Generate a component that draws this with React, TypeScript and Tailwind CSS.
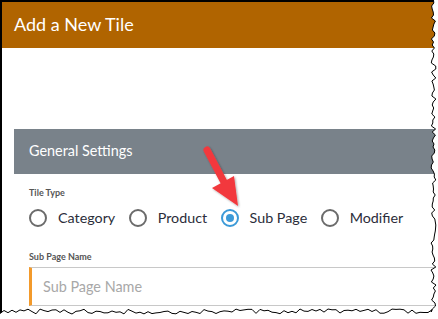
import React from "react";

function Radio({ label, checked }: { label: string; checked?: boolean }) {
  return (
    <div className="flex items-center">
      {checked ? (
        <span className="w-[18px] h-[18px] rounded-full border-2 border-[#3c9ad8] flex items-center justify-center">
          <span className="w-[8px] h-[8px] rounded-full bg-[#3c9ad8]" />
        </span>
      ) : (
        <span className="w-[18px] h-[18px] rounded-full border-2 border-[#6b6b6b]" />
      )}
      <span className="ml-[11px] text-[14.3px] leading-none text-[#2b2d3a]">{label}</span>
    </div>
  );
}

function tornPoints(): { right: string; bottom: string } {
  let seed = 7;
  const rnd = () => {
    seed = (seed * 9301 + 49297) % 233280;
    return seed / 233280;
  };
  const right: string[] = [];
  for (let y = 0; y <= 312; y += 3) {
    right.push(`${(431 + rnd() * 5).toFixed(1)},${y}`);
  }
  const bottom: string[] = [];
  for (let x = 432; x >= 0; x -= 4) {
    bottom.push(`${x},${(309 + rnd() * 5).toFixed(1)}`);
  }
  return { right: right.join(" "), bottom: bottom.join(" ") };
}

export default function App() {
  const { right, bottom } = tornPoints();
  return (
    <div className="relative w-[438px] h-[319px] overflow-hidden bg-white font-['Lato',sans-serif]">
      <div className="h-full border-l-2 border-t-2 border-black">
        <div className="h-[46px] bg-[#b06400] flex items-center pl-[12px] text-white text-[18px] leading-none pb-[2px]">
          Add a New Tile
        </div>
        <div className="ml-[12px] mt-[81px]">
          <div className="h-[45px] bg-[#79828a] flex items-center pl-[15px] text-white text-[14.4px] leading-none">
            General Settings
          </div>
          <div className="pl-[15px]">
            <div className="mt-[14px] text-[9px] font-bold text-[#555] leading-none">Tile Type</div>
            <div className="mt-[12px] flex items-center gap-[13.5px]">
              <Radio label="Category" />
              <Radio label="Product" />
              <Radio label="Sub Page" checked />
              <Radio label="Modifier" />
            </div>
            <div className="mt-[25px] text-[9px] font-bold text-[#555] leading-none">Sub Page Name</div>
            <div className="mt-[6px] h-[39px] border border-[#c8c8c8] border-l-[3px] border-l-[#f39a2b] flex items-center pl-[11px] text-[14.4px] text-[#a8a8a8]">
              Sub Page Name
            </div>
          </div>
        </div>
      </div>
      <svg className="absolute inset-0" width="438" height="319" viewBox="0 0 438 319">
        <defs>
          <filter id="sh" x="-20%" y="-20%" width="140%" height="140%">
            <feDropShadow dx="1" dy="1" stdDeviation="1" floodColor="#000" floodOpacity="0.35" />
          </filter>
        </defs>
        <polygon points={`${right} ${bottom} 0,319 438,319 438,0`} fill="#ffffff" />
        <polyline points={`${right} ${bottom}`} fill="none" stroke="#000" strokeWidth="1" />
        <g filter="url(#sh)">
          <line x1="207" y1="150" x2="225" y2="184" stroke="#f2393d" strokeWidth="7" strokeLinecap="round" />
          <polygon points="212,188 234,176 238,206" fill="#f2393d" />
        </g>
      </svg>
    </div>
  );
}
